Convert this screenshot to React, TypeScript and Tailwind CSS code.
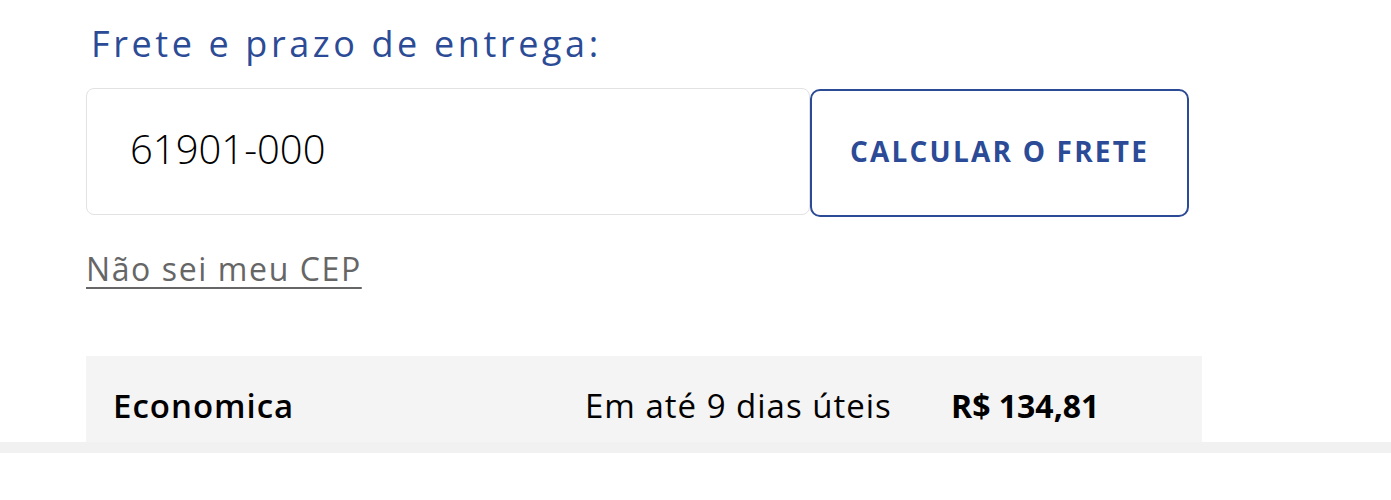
import React, { useState } from 'react';

const App: React.FC = () => {
  const [cep, setCep] = useState('61901-000');

  return (
    <div className="w-[1391px] h-[500px] bg-white overflow-hidden" style={{ fontFamily: '"Open Sans", "Noto Sans", sans-serif' }}>
      <div className="pl-[86px] pt-[20px] h-[442px] flex flex-col">
        {/* Title */}
        <h2 className="pl-[5px] text-[36px] leading-[48px] text-[#2c4b96] tracking-[3.6px] font-normal">
          Frete e prazo de entrega:
        </h2>

        {/* CEP form */}
        <div className="mt-[18px] flex items-center">
          <input
            type="text"
            value={cep}
            onChange={(e) => setCep(e.target.value)}
            className="w-[724px] h-[127px] pl-[43px] pb-[6px] border border-[#e2e2e2] rounded-[8px] text-[40px] text-black outline-none font-light"
          />
          <button className="w-[379px] h-[128px] mt-[3px] pb-[4px] border-2 border-[#2c4b96] rounded-[10px] bg-white text-[#2c4b96] text-[28px] font-bold tracking-[2.2px]">
            CALCULAR O FRETE
          </button>
        </div>

        <a href="#" className="mt-[32px] w-fit text-[32px] leading-[40px] text-[#666] underline underline-offset-[6px] decoration-[2px] tracking-[1.6px]">
          Não sei meu CEP
        </a>

        {/* Shipping option */}
        <div className="mt-[67px] w-[1116px] h-[86px] bg-[#f4f4f4] flex items-center pl-[27px] pt-[14px] text-[33px] text-black">
          <span className="w-[472px] font-semibold tracking-[1px]">Economica</span>
          <span className="w-[366px] tracking-[1px]">Em até 9 dias úteis</span>
          <span className="font-bold text-[32px]">R$ 134,81</span>
        </div>
      </div>
      <div className="w-full h-[11px] bg-[#f1f1f1]" />
    </div>
  );
};

export default App;
